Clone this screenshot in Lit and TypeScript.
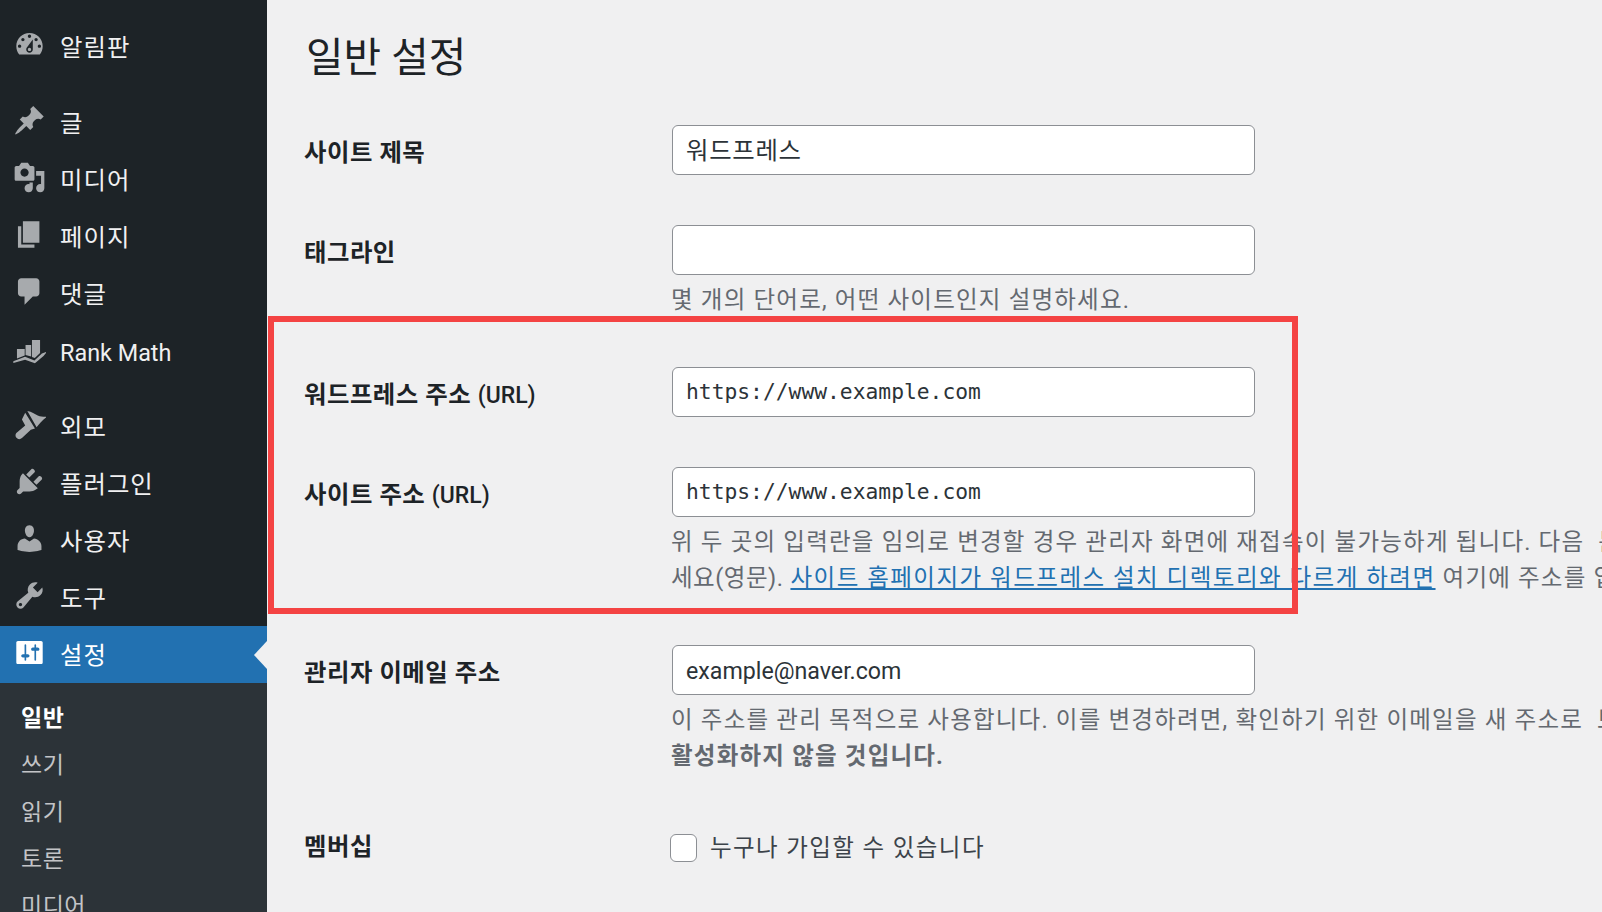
import { LitElement, css, html, svg } from 'lit';
import { customElement } from 'lit/decorators.js';

const ICONS: Record<string, string> = {
  dashboard: 'M3.76 16h12.48c1.1-1.37 1.76-3.11 1.76-5 0-4.42-3.58-8-8-8s-8 3.58-8 8c0 1.89.66 3.63 1.76 5zM10 4c.55 0 1 .45 1 1s-.45 1-1 1-1-.45-1-1 .45-1 1-1zM6 6c.55 0 1 .45 1 1s-.45 1-1 1-1-.45-1-1 .45-1 1-1zm8 0c.55 0 1 .45 1 1s-.45 1-1 1-1-.45-1-1 .45-1 1-1zm-5.37 5.55L12 7v6c0 1.1-.9 2-2 2s-2-.9-2-2c0-.57.24-1.08.63-1.45zM4 10c.55 0 1 .45 1 1s-.45 1-1 1-1-.45-1-1 .45-1 1-1zm12 0c.55 0 1 .45 1 1s-.45 1-1 1-1-.45-1-1 .45-1 1-1zm-5 3c0-.55-.45-1-1-1s-1 .45-1 1 .45 1 1 1 1-.45 1-1z',
  post: 'M10.44 3.02l1.82-1.82 6.36 6.35-1.83 1.82c-1.05-.68-2.48-.57-3.41.36l-.75.75c-.92.93-1.04 2.35-.35 3.41l-1.83 1.82-2.41-2.41-2.8 2.79c-.42.42-3.38 2.71-3.8 2.29s1.86-3.39 2.28-3.81l2.79-2.79L4.1 9.36l1.83-1.82c1.05.69 2.48.57 3.4-.36l.75-.75c.93-.92 1.05-2.35.36-3.41z',
  media: 'M13 11V4c0-.55-.45-1-1-1h-1.67L9 1H5L3.67 3H2c-.55 0-1 .45-1 1v7c0 .55.45 1 1 1h10c.55 0 1-.45 1-1zM7 4.5c1.38 0 2.5 1.12 2.5 2.5S8.38 9.5 7 9.5 4.5 8.38 4.5 7 5.62 4.5 7 4.5zM14 6h5v10.5c0 1.38-1.12 2.5-2.5 2.5S14 17.88 14 16.5s1.12-2.5 2.5-2.5c.17 0 .34.02.5.05V9h-3V6zm-4 8.05V13h2v3.5c0 1.38-1.12 2.5-2.5 2.5S7 17.88 7 16.5 8.12 14 9.5 14c.17 0 .34.02.5.05z',
  page: 'M6 15V2h10v13H6zm-1 1h8v2H3V5h2v11z',
  comments: 'M5 2h9c1.1 0 2 .9 2 2v7c0 1.1-.9 2-2 2h-2l-5 5v-5H5c-1.1 0-2-.9-2-2V4c0-1.1.9-2 2-2z',
  rank: 'M2.4 10.3h4.7v4L2.4 16zM7.6 7.9h3.4v6.9l-3.4-.9zM11.5 4.8h4.9v8l-3.2 3-1.7-.6zM.2 17.8L7.3 15l5.7 2.2 4.5-4.2 3.3-1.2-2.3 2.7-5.2 4.5-6-2.2-7.1 2z',
  appearance: 'M8.7 1.8C11.5 2.2 13 3.6 15 4.5c2 .8 4 1 5.6.8-2.6 2-4.6 4.2-6.3 6.3zM7.4 2.9l5.9 9.5-2.5.8-5.2 4.9c-1.2 1.1-2.6 1-3.5 0-.9-1.1-.7-2.4.3-3.2L7.4 10.6 5.4 7z',
  plugins: 'M13.11 4.36L9.87 7.6 8 5.73l3.24-3.24c.35-.34 1.05-.2 1.56.32.52.51.66 1.21.31 1.55zm-8 1.77l.91-1.12 9.01 9.01-1.19.84c-.71.71-2.63 1.16-3.82 1.16H6.14L4.9 17.26c-.59.59-1.54.59-2.12 0-.59-.58-.59-1.53 0-2.12l1.24-1.24v-3.88c0-1.13.4-3.19 1.09-3.89zm7.26 3.97l3.24-3.24c.34-.35 1.04-.21 1.55.31.52.51.66 1.21.31 1.55l-3.24 3.25z',
  users: 'M10 9.25c-2.27 0-2.73-3.44-2.73-3.44C7 4.02 7.82 2 9.97 2c2.16 0 2.98 2.02 2.71 3.81 0 0-.41 3.44-2.68 3.44zm0 2.57L12.72 10c2.39 0 4.52 2.33 4.52 4.53v2.49s-3.65 1.13-7.24 1.13c-3.65 0-7.24-1.13-7.24-1.13v-2.49c0-2.25 1.94-4.48 4.47-4.48z',
  tools: 'M16.68 9.77c-1.34 1.34-3.3 1.67-4.95.99l-5.41 6.52c-.99.99-2.59.99-3.58 0s-.99-2.59 0-3.57l6.52-5.42c-.68-1.65-.35-3.61.99-4.95 1.28-1.28 3.12-1.62 4.72-1.06l-2.89 2.89 2.82 2.82 2.86-2.87c.53 1.58.18 3.39-1.08 4.65zM3.81 16.21c.4.39 1.04.39 1.43 0 .4-.4.4-1.04 0-1.43-.39-.4-1.03-.4-1.43 0-.39.39-.39 1.03 0 1.43z',
  settings: 'M18 16V4c0-.55-.45-1-1-1H3c-.55 0-1 .45-1 1v12c0 .55.45 1 1 1h14c.55 0 1-.45 1-1zM8 11h1c.55 0 1 .45 1 1s-.45 1-1 1H8v1.5c0 .28-.22.5-.5.5s-.5-.22-.5-.5V13H6c-.55 0-1-.45-1-1s.45-1 1-1h1V5.5c0-.28.22-.5.5-.5s.5.22.5.5V11zm5-2h-1c-.55 0-1-.45-1-1s.45-1 1-1h1V5.5c0-.28.22-.5.5-.5s.5.22.5.5V7h1c.55 0 1 .45 1 1s-.45 1-1 1h-1v5.5c0 .28-.22.5-.5.5s-.5-.22-.5-.5V9z',
};

// sep marks the gap WordPress leaves before a menu group
const MENU = [
  { icon: 'dashboard', label: '알림판' },
  { icon: 'post', label: '글', sep: true },
  { icon: 'media', label: '미디어' },
  { icon: 'page', label: '페이지' },
  { icon: 'comments', label: '댓글' },
  { icon: 'rank', label: 'Rank Math', latin: true },
  { icon: 'appearance', label: '외모', sep: true },
  { icon: 'plugins', label: '플러그인' },
  { icon: 'users', label: '사용자' },
  { icon: 'tools', label: '도구' },
  { icon: 'settings', label: '설정', active: true },
];

const SUBMENU = ['일반', '쓰기', '읽기', '토론', '미디어'];

@customElement('app-root')
export class AppRoot extends LitElement {
  static styles = css`
    :host {
      display: flex;
      position: relative;
      width: 1602px;
      height: 912px;
      overflow: hidden;
      background: #f0f0f1;
      color: #1d2327;
      font-family: Roboto, 'Noto Sans CJK KR', sans-serif;
    }
    .sidebar {
      flex: 0 0 267px;
      background: #1d2327;
      padding-top: 18px;
      box-sizing: border-box;
    }
    .item {
      position: relative;
      display: flex;
      align-items: center;
      height: 57px;
      padding-left: 13px;
      color: #f0f0f1;
      font-size: 24.4px;
      letter-spacing: 1px;
    }
    .item span {
      margin-top: -2px;
    }
    .item span.latin {
      margin-top: 4px;
      font-size: 23.4px;
      letter-spacing: 0;
    }
    .item.sep {
      margin-top: 19px;
    }
    .item svg {
      flex: 0 0 33px;
      width: 33px;
      height: 33px;
      margin-right: 14px;
      margin-top: -4px;
      fill: #a7aaad;
    }
    .item.active {
      background: #2271b1;
      color: #fff;
    }
    .item.active svg {
      fill: #fff;
    }
    .item.active::after {
      content: '';
      position: absolute;
      right: 0;
      top: 15px;
      border: 14px solid transparent;
      border-left-width: 0;
      border-right: 13px solid #f0f0f1;
    }
    .submenu {
      background: #2c3338;
      height: 229px;
      padding-top: 12px;
      box-sizing: border-box;
    }
    .sub {
      height: 47px;
      line-height: 47px;
      padding-left: 21px;
      color: #c3c4c7;
      font-size: 23px;
      letter-spacing: 0.5px;
    }
    .sub.current {
      color: #fff;
      font-weight: 700;
    }
    .main {
      flex: 1;
      min-width: 0;
      padding-left: 37px;
    }
    h1 {
      margin: 0 0 39px 2px;
      padding-top: 31px;
      height: 55px;
      line-height: 55px;
      font-size: 40.8px;
      font-weight: 400;
    }
    .row {
      display: grid;
      grid-template-columns: 368px 1fr;
      margin-bottom: 50px;
    }
    .th {
      height: 45px;
      padding-top: 5px;
      line-height: 45px;
      font-size: 24.4px;
      font-weight: 700;
      letter-spacing: 0.5px;
      white-space: nowrap;
    }
    .th.short {
      padding-top: 1px;
    }
    .th small {
      font-size: 23px;
      font-weight: 500;
      letter-spacing: 0;
    }
    .cell {
      min-width: 0;
    }
    input.text {
      display: block;
      width: 583px;
      height: 50px;
      box-sizing: border-box;
      padding: 0 12px 3px 13px;
      border: 1.5px solid #8c8f94;
      border-radius: 6px;
      background: #fff;
      color: #2c3338;
      font-family: inherit;
      font-size: 24.4px;
      letter-spacing: 0.7px;
      outline: none;
    }
    input.mono {
      padding: 0 12px 2px 13px;
      font-family: 'DejaVu Sans Mono', monospace;
      font-size: 21.3px;
      letter-spacing: 0;
    }
    input.email {
      padding: 1px 12px 0 13px;
      font-size: 23.2px;
      letter-spacing: 0;
    }
    .help {
      margin: 7px 0 -1px -1px;
      line-height: 36px;
      color: #646970;
      font-size: 23.5px;
      letter-spacing: 1.2px;
      white-space: nowrap;
    }
    .help .lead {
      letter-spacing: 0.5px;
    }
    .help a {
      color: #2271b1;
      letter-spacing: 1.5px;
    }
    .help strong {
      font-weight: 700;
    }
    .check {
      display: flex;
      align-items: center;
      gap: 13px;
      height: 46px;
      font-size: 23.5px;
      letter-spacing: 1.4px;
      color: #3c434a;
    }
    .check input {
      appearance: none;
      width: 27px;
      height: 28px;
      margin: 3px 0 0 -2px;
      border: 1.5px solid #8c8f94;
      border-radius: 6px;
      background: #fff;
    }
    .mark {
      position: absolute;
      left: 268px;
      top: 316px;
      width: 1030px;
      height: 298px;
      box-sizing: border-box;
      border: 6px solid #f44343;
    }
  `;

  render() {
    return html`
      <nav class="sidebar">
        ${MENU.map(
          (m) => html`
            <div class="item ${m.sep ? 'sep' : ''} ${m.active ? 'active' : ''}">
              <svg viewBox="0 0 20 20">${svg`<path d=${ICONS[m.icon]} />`}</svg>
              <span class=${m.latin ? 'latin' : ''}>${m.label}</span>
            </div>
          `,
        )}
        <div class="submenu">
          ${SUBMENU.map((s, i) => html`<div class="sub ${i === 0 ? 'current' : ''}">${s}</div>`)}
        </div>
      </nav>
      <main class="main">
        <h1>일반 설정</h1>
        <div class="row">
          <div class="th">사이트 제목</div>
          <div class="cell"><input class="text" value="워드프레스" /></div>
        </div>
        <div class="row">
          <div class="th">태그라인</div>
          <div class="cell">
            <input class="text" value="" />
            <p class="help">몇 개의 단어로, 어떤 사이트인지 설명하세요.</p>
          </div>
        </div>
        <div class="row">
          <div class="th">워드프레스 주소 <small>(URL)</small></div>
          <div class="cell"><input class="text mono" value="https://www.example.com" /></div>
        </div>
        <div class="row">
          <div class="th">사이트 주소 <small>(URL)</small></div>
          <div class="cell">
            <input class="text mono" value="https://www.example.com" />
            <p class="help">
              위 두 곳의 입력란을 임의로 변경할 경우 관리자 화면에 재접속이 불가능하게 됩니다. 다음&nbsp; 문<br /><span class="lead">세요(영문).</span>
              <a href="#">사이트 홈페이지가 워드프레스 설치 디렉토리와 다르게 하려면</a> 여기에 주소를 입력
            </p>
          </div>
        </div>
        <div class="row">
          <div class="th">관리자 이메일 주소</div>
          <div class="cell">
            <input class="text email" value="example@naver.com" />
            <p class="help">
              이 주소를 관리 목적으로 사용합니다. 이를 변경하려면, 확인하기 위한 이메일을 새 주소로&nbsp; 보내<br />
              <strong>활성화하지 않을 것입니다.</strong>
            </p>
          </div>
        </div>
        <div class="row">
          <div class="th short">멤버십</div>
          <div class="cell">
            <label class="check"><input type="checkbox" /><span>누구나 가입할 수 있습니다</span></label>
          </div>
        </div>
      </main>
      <div class="mark"></div>
    `;
  }
}
